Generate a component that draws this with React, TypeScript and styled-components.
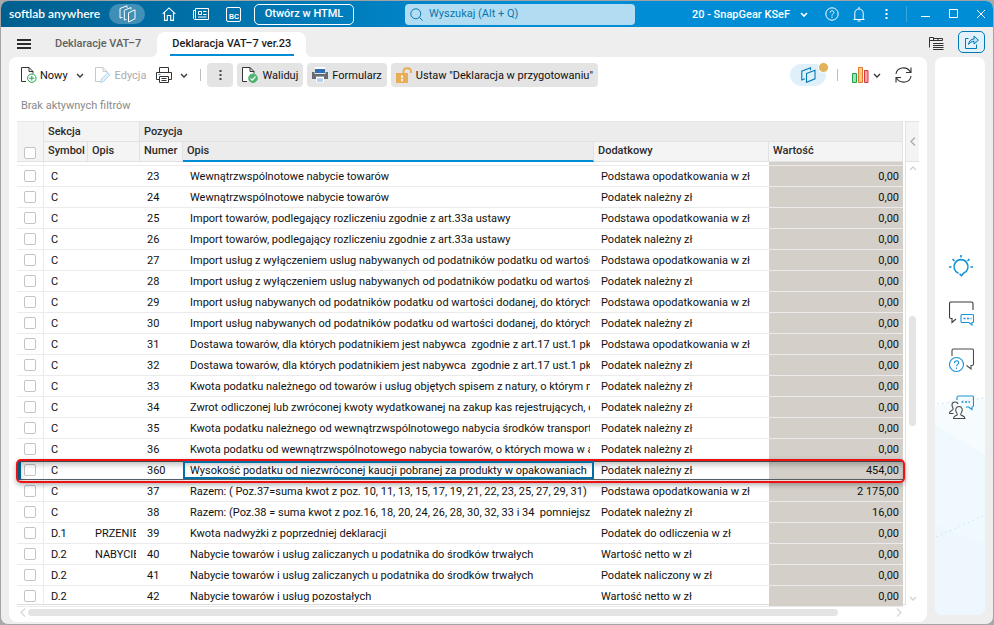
import React from "react";
import styled, { createGlobalStyle, css } from "styled-components";

const GlobalStyle = createGlobalStyle`
  *, *::before, *::after { box-sizing: border-box; }
  body {
    margin: 0;
    background: #a9a9a9;
    color: #1c1c1c;
    font: 11px/16px Roboto, sans-serif;
  }
  button, input { font: inherit; color: inherit; }
  svg { display: block; flex: none; fill: none; }
`;

const Window = styled.div`
  display: flex;
  flex-direction: column;
  height: 100vh;
  border: 1px solid #a3a3a3;
  border-radius: 8px;
  background: #eeeeee;
  overflow: hidden;
`;

const TitleBar = styled.header`
  display: flex;
  align-items: center;
  flex: none;
  height: 26px;
  padding-left: 8px;
  color: #fff;
  background: linear-gradient(90deg, #00608f 0, #0070a8 20%, #008dd5 52%);
`;

const Brand = styled.strong`
  width: 100px;
  font: 600 12px/16px Lato, sans-serif;
  white-space: nowrap;
`;

const PlainButton = styled.button`
  display: flex;
  align-items: center;
  justify-content: center;
  flex: none;
  padding: 0;
  border: 0;
  background: none;
`;

const BrandPill = styled(PlainButton)`
  width: 36px;
  height: 20px;
  margin-right: 12px;
  border-radius: 10px;
  background: rgba(255, 255, 255, 0.25);
`;

const TitleIcon = styled(PlainButton)<{ $w: number }>`
  width: ${(p) => p.$w}px;
  height: 22px;
`;

const OpenHtml = styled(PlainButton)`
  width: 100px;
  height: 21px;
  margin-left: 8px;
  border: 1px solid #fff;
  border-radius: 5px;
  font-weight: 500;
  white-space: nowrap;
`;

const SearchBox = styled.label`
  display: flex;
  align-items: center;
  gap: 6px;
  width: 230px;
  height: 21px;
  margin-left: 51px;
  padding: 0 5px;
  border-radius: 4px;
  color: #0878b0;
  background: #b1dcf2;
`;

const SearchInput = styled.input`
  flex: 1;
  min-width: 0;
  padding: 0;
  border: 0;
  outline: 0;
  background: none;
  &::placeholder { color: #0878b0; opacity: 1; }
`;

const TitleRight = styled.div`
  display: flex;
  align-items: center;
  margin-left: auto;
`;

const CompanyButton = styled(PlainButton)`
  gap: 10px;
  margin-right: 10px;
  padding-top: 2px;
  font-weight: 500;
  white-space: nowrap;
  svg { margin-bottom: 2px; }
`;

const TitleDivider = styled.span`
  width: 1px;
  height: 16px;
  margin: 0 6px;
  background: #3aa6de;
`;

const Workspace = styled.div`
  display: flex;
  flex: 1;
  min-height: 0;
  padding: 0 8px 2px;
  gap: 8px;
`;

const MainColumn = styled.div`
  display: flex;
  flex: 1;
  flex-direction: column;
  min-width: 0;
`;

const TabBar = styled.nav`
  display: flex;
  align-items: flex-end;
  height: 30px;
  flex: none;
`;

const MenuButton = styled(PlainButton)`
  width: 30px;
  height: 26px;
  margin-right: 8px;
`;

const Tab = styled.button<{ $active?: boolean }>`
  position: relative;
  height: 25px;
  padding: 0 8px 2px;
  border: 0;
  background: none;
  color: #616161;
  font-weight: 500;
  white-space: nowrap;
  ${(p) =>
    p.$active &&
    css`
      margin-left: 8px;
      padding: 0 15px 2px;
      border-radius: 8px 8px 0 0;
      color: #1c1c1c;
      background: #fff;
      &::before, &::after {
        content: "";
        position: absolute;
        bottom: 0;
        width: 6px;
        height: 6px;
      }
      &::before {
        left: -6px;
        background: radial-gradient(circle at 0 0, transparent 6px, #fff 6px);
      }
      &::after {
        right: -6px;
        background: radial-gradient(circle at 100% 0, transparent 6px, #fff 6px);
      }
    `}
`;

const TabUnderline = styled.span`
  position: absolute;
  right: 12px;
  bottom: 1px;
  left: 13px;
  height: 2px;
  background: #008dd5;
`;

const Card = styled.main`
  display: flex;
  flex: 1;
  flex-direction: column;
  min-height: 0;
  padding: 6px 8px 3px;
  border-radius: 8px;
  background: #fff;
`;

const Toolbar = styled.div`
  display: flex;
  align-items: center;
  height: 24px;
  flex: none;
  padding-left: 4px;
`;

const ToolButton = styled(PlainButton)<{ $filled?: boolean; $faded?: boolean }>`
  gap: ${(p) => (p.$filled || p.$faded ? 4 : 3)}px;
  height: 24px;
  padding-top: 2px;
  white-space: nowrap;
  color: ${(p) => (p.$faded ? "#ababab" : "#111")};
  svg { margin-bottom: 2px; }
  ${(p) =>
    p.$faded &&
    css`
      margin: 0 10px 0 3px;
    `}
  ${(p) =>
    p.$filled &&
    css`
      margin-right: 4px;
      padding: 2px 5px 0;
      border-radius: 4px;
      background: #e4e4e4;
    `}
`;

const MoreButton = styled(ToolButton)`
  width: 26px;
`;

const ArrowButton = styled(PlainButton)<{ $narrow?: boolean }>`
  width: ${(p) => (p.$narrow ? 16 : 24)}px;
  height: 24px;
`;

const Divider = styled.span<{ $wide?: boolean }>`
  width: 1px;
  height: 12px;
  margin: ${(p) => (p.$wide ? "0 14px 0 11px" : "0 6px 0 4px")};
  background: #bdbdbd;
`;

const ToolbarRight = styled.div`
  display: flex;
  align-items: center;
  margin-left: auto;
  padding-right: 7px;
`;

const LayersPill = styled(PlainButton)`
  position: relative;
  width: 36px;
  height: 22px;
  border-radius: 11px;
  background: #e0f0fa;
`;

const Dot = styled.span`
  position: absolute;
  top: -2px;
  right: -3px;
  width: 11px;
  height: 11px;
  border: 1px solid #fff;
  border-radius: 50%;
  background: #e2b25a;
`;

const RefreshButton = styled(ToolButton)`
  margin-left: 10px;
`;

const FilterNote = styled.p`
  flex: none;
  margin: 11px 4px 7px;
  color: #8a8a8a;
`;

const GridArea = styled.section`
  display: flex;
  flex: 1;
  min-height: 0;
`;

const TableWrap = styled.div`
  flex: 1;
  min-width: 0;
  padding-right: 2px;
  border-right: 1px solid #e2e2e2;
  border-bottom: 1px solid #dcdcdc;
`;

const Table = styled.table`
  width: 100%;
  table-layout: fixed;
  border-collapse: separate;
  border-spacing: 0;
`;

const Col = styled.col<{ $w?: number }>`
  width: ${(p) => (p.$w ? `${p.$w}px` : "auto")};
`;

const HeadCell = styled.th<{ $mid?: boolean; $dark?: boolean; $sorted?: boolean }>`
  height: ${(p) => (p.$mid ? 20 : 21)}px;
  padding: ${(p) => (p.$mid && !p.$sorted ? "0 4px 2px" : "0 4px")};
  border-top: ${(p) => (p.$mid ? "0" : "1px solid #e6e6e6")};
  border-right: 1px solid #e2e2e2;
  border-bottom: ${(p) => (p.$sorted ? "2px solid #008dd5" : "1px solid #e2e2e2")};
  background: ${(p) => (p.$dark ? "#ececec" : "#f4f4f4")};
  color: #2b2b2b;
  font-weight: 500;
  text-align: left;
  white-space: nowrap;
  overflow: hidden;
`;

const CheckHead = styled(HeadCell)`
  padding: 0 0 2px 7px;
  vertical-align: bottom;
`;

const Check = styled.input.attrs({ type: "checkbox" })`
  appearance: none;
  display: block;
  width: 12px;
  height: 12px;
  margin: 0;
  border: 1px solid #c4c4c4;
  border-radius: 2px;
  background: #fff;
`;

const Cell = styled.td<{ $value?: boolean }>`
  height: 21px;
  padding: 2px 4px 0 7px;
  border-bottom: 1px solid #ebebeb;
  color: #111;
  white-space: pre;
  ${(p) =>
    p.$value &&
    css`
      background: #d4cfc8;
      text-align: right;
    `}
`;

const CheckCell = styled(Cell)`
  padding-top: 0;
  border-right: 1px solid #ebebeb;
`;

const Clip = styled.div`
  overflow: hidden;
`;

const SliverCell = styled.td<{ $value?: boolean; $first?: boolean }>`
  height: 4px;
  padding: 0;
  border-right: ${(p) => (p.$first ? "1px solid #ebebeb" : "0")};
  border-bottom: 1px solid #ebebeb;
  background: ${(p) => (p.$value ? "#d4cfc8" : "#fff")};
`;

const Row = styled.tr<{ $selected?: boolean }>`
  ${(p) =>
    p.$selected &&
    css`
      position: relative;
      z-index: 1;
    `}
`;

const RowFrame = styled.span`
  position: absolute;
  inset: 1px -1px 1px 1px;
  border: solid #566268;
  border-width: 1px 0;
  border-left: 3px solid #0070a5;
  pointer-events: none;
`;

const Highlight = styled.span`
  position: absolute;
  inset: -1px -2px -2px -1px;
  border: 2px solid #ee1111;
  border-radius: 5px;
  box-shadow: 0 2px 5px rgba(0, 0, 0, 0.3), inset 2px 3px 6px rgba(0, 0, 0, 0.3);
  pointer-events: none;
`;

const EditFrame = styled.span`
  position: absolute;
  inset: 1px 0;
  border: 2px solid #0070a5;
  pointer-events: none;
`;

const EditCell = styled(Cell)`
  position: relative;
`;

const SideRail = styled.div`
  display: flex;
  flex-direction: column;
  align-items: center;
  width: 13px;
  flex: none;
  padding-bottom: 2px;
`;

const CollapseButton = styled(PlainButton)`
  width: 100%;
  height: 41px;
  border: solid #e2e2e2;
  border-width: 1px 0;
  background: #f4f4f4;
`;

const VTrack = styled.div`
  display: flex;
  flex: 1;
  flex-direction: column;
  align-items: center;
  width: 100%;
  padding-top: 2px;
`;

const VThumb = styled.div`
  width: 7px;
  height: 110px;
  margin: 143px 0 auto;
  border-radius: 4px;
  background: #e4e4e4;
`;

const HScroll = styled.div`
  display: flex;
  align-items: center;
  flex: none;
  height: 14px;
  padding: 0 16px 0 2px;
`;

const HTrack = styled.div`
  flex: 1;
  margin: 0 5px 0 1px;
`;

const HThumb = styled.div`
  width: 94%;
  height: 7px;
  border-radius: 4px;
  background: #e4e4e4;
`;

const SideColumn = styled.aside`
  display: flex;
  flex-direction: column;
  width: 50px;
  flex: none;
  padding-bottom: 7px;
`;

const SideTop = styled.div`
  display: flex;
  align-items: center;
  justify-content: space-between;
  align-self: flex-end;
  width: 56px;
  height: 30px;
  flex: none;
`;

const ListButton = styled(PlainButton)`
  padding-top: 3px;
`;

const ShareButton = styled(PlainButton)`
  width: 27px;
  height: 22px;
  border: 1px solid #0079b5;
  border-radius: 5px;
  background: #e2f1fa;
`;

const SidePanel = styled.div`
  position: relative;
  display: flex;
  flex: 1;
  flex-direction: column;
  align-items: center;
  gap: 21px;
  padding: 196px 0 0 2px;
  border-radius: 8px;
  background: #fff;
  overflow: hidden;
`;

const PanelArt = styled.svg`
  position: absolute;
  bottom: 0;
  left: 0;
  width: 50px;
  height: 220px;
`;

const SideButton = styled(PlainButton)`
  position: relative;
  width: 26px;
  height: 26px;
`;

type Dir = "up" | "down" | "left" | "right";
const chevrons: Record<Dir, string> = {
  down: "M1 3l3 3 3-3",
  up: "M1 6l3-3 3 3",
  left: "M6 0.5L2 4.5l4 4",
  right: "M2 0.5l4 4-4 4",
};

const Chevron = ({ dir = "down", color = "#333", weight = 1.3 }: { dir?: Dir; color?: string; weight?: number }) => (
  <svg width="8" height="9" viewBox="0 0 8 9" stroke={color} strokeWidth={weight}>
    <path d={chevrons[dir]} />
  </svg>
);

const StackIcon = () => (
  <svg width="17" height="18" viewBox="0 0 17 18" stroke="#fff" strokeWidth="1">
    <path d="M9.5 7.8L16 4.8v9L9.5 17z" />
    <path d="M7.5 14.5L5.3 15V5.3L12 2.5v2" />
    <path d="M3.5 12.5L1 13V3.5L8 .8v2" />
  </svg>
);

const HomeIcon = () => (
  <svg width="14" height="14" viewBox="0 0 14 14" stroke="#fff" strokeWidth="1.1">
    <path d="M.7 6.8L7 .9l6.3 5.9M2.5 5.5v7.9h2.8V8.5h3.4v4.9h2.8V5.5" />
  </svg>
);

const NewsIcon = () => (
  <svg width="16" height="12" viewBox="0 0 16 12" stroke="#fff" strokeWidth="1">
    <path d="M2.5.5h13v11H1.5l-1-1v-8h2zM2.5 2.5v8M5.5 3.5h3v3h-3zM10 3.5h3.5M10 6.5h3.5M5 9h8.500" />
  </svg>
);

const BcText = styled.span`
  display: flex;
  align-items: flex-end;
  justify-content: flex-end;
  width: 15px;
  height: 15px;
  border: 1px solid #fff;
  border-radius: 2px;
  padding-right: 1px;
  font: 700 7px/8px "Liberation Sans", sans-serif;
`;

const SearchIcon = () => (
  <svg width="13" height="13" viewBox="0 0 13 13" stroke="#0878b0" strokeWidth="1">
    <circle cx="5.8" cy="5.8" r="5" />
    <path d="M9.4 9.4l3.2 3.2" />
  </svg>
);

const HelpIcon = () => (
  <svg width="14" height="14" viewBox="0 0 14 14" stroke="#fff" strokeWidth="1">
    <circle cx="7" cy="7" r="6.2" />
    <path d="M5.2 5.6c0-2.6 3.7-2.4 3.7-.2C8.9 6.8 7 6.8 7 8.6M7 9.6v1.2" />
  </svg>
);

const BellIcon = () => (
  <svg width="12" height="16" viewBox="0 0 12 16" stroke="#fff" strokeWidth="1">
    <path d="M.5 13.5h11M1.8 13.5V7.2c0-5.6 8.4-5.6 8.4 0v6.3M6 .8v2M4.5 15h3" />
  </svg>
);

const Dots = ({ color = "#fff" }: { color?: string }) => (
  <svg width="3" height="12" viewBox="0 0 3 12">
    <path fill={color} d="M.5 1h2v2h-2zM.5 5h2v2h-2zM.5 9h2v2h-2z" />
  </svg>
);

const MinIcon = () => (
  <svg width="10" height="10" viewBox="0 0 10 10" stroke="#fff">
    <path d="M0 7.5h9" />
  </svg>
);
const MaxIcon = () => (
  <svg width="10" height="10" viewBox="0 0 10 10" stroke="#fff">
    <path d="M.5.5h8v8h-8z" />
  </svg>
);
const CloseIcon = () => (
  <svg width="10" height="10" viewBox="0 0 10 10" stroke="#fff">
    <path d="M1 1l8 8M9 1L1 9" />
  </svg>
);

const MenuIcon = () => (
  <svg width="14" height="10" viewBox="0 0 14 10" stroke="#2b2b2b" strokeWidth="2">
    <path d="M0 1h14M0 5h14M0 9h14" />
  </svg>
);

const filePath = "M5 14.5H.5V.5H8l4 4v2M8 .5v4h4";

const NewFileIcon = () => (
  <svg width="16" height="16" viewBox="0 0 16 16" stroke="#333" strokeWidth="1">
    <path d={filePath} />
    <circle cx="10.8" cy="11.2" r="4.2" fill="#fff" stroke="#19a34a" />
    <path stroke="#19a34a" d="M10.8 8.7v5M8.3 11.2h5" />
  </svg>
);

const EditFileIcon = () => (
  <svg width="16" height="16" viewBox="0 0 16 16" stroke="#c9c9c9" strokeWidth="1">
    <path d={filePath} />
    <path fill="#e3f1fa" stroke="#a9d4ee" d="M5.500 15.500l1-3.500 6.500-6.500 2 2.300-6.500 6.700z" />
  </svg>
);

const CheckFileIcon = () => (
  <svg width="16" height="16" viewBox="0 0 16 16" stroke="#333" strokeWidth="1">
    <path fill="#fff" d={filePath} />
    <circle cx="11" cy="11.2" r="4.3" fill="#4db36e" stroke="#4db36e" />
    <path stroke="#fff" strokeWidth="1.2" d="M8.500 11.300l1.800 1.800 3.200-3.600" />
  </svg>
);

const PrinterIcon = () => (
  <svg width="16" height="16" viewBox="0 0 16 16" stroke="#333" strokeWidth="1">
    <path d="M3.5 5.5v-5h9v5M3.5 12.5h-3v-7h15v7h-3" />
    <path d="M3.5 9.5h9v6h-9z" />
    <path d="M5.5 11.5h5M5.5 13.5h5" />
    <path stroke="#1b8fd0" d="M2.5 7.5h2" />
  </svg>
);

const FormPrinterIcon = () => (
  <svg width="16" height="16" viewBox="0 0 16 16">
    <path fill="#fff" d="M3 0h10v3H3z" />
    <path fill="#666b70" d="M0 5h2.500v2h11V5H16v7H0z" />
    <path fill="#2f6db5" d="M3 2h10v4H3z" />
    <path fill="#fff" d="M4 9.500h8v6H4z" />
    <path stroke="#9aa4ad" d="M3.500 9.500h9" />
    <path stroke="#7ba6d6" d="M5 12h6M5 14h6" />
  </svg>
);

const LockIcon = () => (
  <svg width="16" height="16" viewBox="0 0 16 16">
    <path stroke="#e9ad55" strokeWidth="2" d="M7.500 6V4.500c0-4.500 7.500-4.500 7.500 0V6" />
    <path fill="#e9ad55" d="M0 6h12v10H0z" />
    <path fill="#fff" d="M5 8.500h2v2H5zM5.300 11.500h1.500v3H5.300z" />
  </svg>
);

const LayersIcon = () => (
  <svg width="15" height="16" viewBox="0 0 15 16" stroke="#0079b5" strokeWidth="1.1">
    <path d="M5.500 6.500l8.500-3.200v8.500l-8.500 3.500z" />
    <path d="M3.800 11.800L.8 13V4.200L9.500.8v2.500" />
  </svg>
);

const ChartIcon = () => (
  <svg width="17" height="16" viewBox="0 0 17 16" strokeWidth="1">
    <path fill="#a9dcb9" stroke="#19a34a" d="M.5 6.500h4v9h-4z" />
    <path fill="#f8cd8c" stroke="#e8772a" d="M6.500.5h4v15h-4z" />
    <path fill="#f4a8ad" stroke="#d9363e" d="M12.500 3.500h3.500v12h-3.500z" />
  </svg>
);

const RefreshIcon = () => (
  <svg width="17" height="16" viewBox="0 0 17 16" stroke="#333" strokeWidth="1.1">
    <path d="M1 7C1.800.2 11.500-1.500 15.500 5M16 .5v5h-5M16 9c-.8 6.800-10.500 8.500-14.500 2M1 15.500v-5h5" />
  </svg>
);

const ListIcon = () => (
  <svg width="15" height="14" viewBox="0 0 15 14" stroke="#333" strokeWidth="1">
    <path d="M.5 10.500V.5h4v3M.5 3.500h13v-2h-9M9 1.500v2M4 6.500h10.500M4 8.500h10.500M4 10.500h10.500M4 12.500h10.500" />
  </svg>
);

const ShareIcon = () => (
  <svg width="14" height="14" viewBox="0 0 14 14" stroke="#0079b5" strokeWidth="1">
    <path d="M3.500 3.500h-3v10h11v-4" />
    <path fill="#b9dff3" d="M3.500 9.500C4 5.800 6 4 9 4V1l4.500 4.200L9 9V6.500c-2.500 0-4 .8-5.500 3z" />
  </svg>
);

const BulbIcon = () => (
  <svg width="24" height="22" viewBox="0 0 24 22" stroke="#0f93d6" strokeWidth="1.6">
    <path d="M9.500 18.200a7 7 0 1 1 5 0l-2 2.500-2-1.800M12 0v2.500M3.500 4l2 2M20.500 4l-2 2M0 12h2.500M21.500 12H24" />
  </svg>
);

const ChatIcon = () => (
  <svg width="25" height="25" viewBox="0 0 25 25" stroke="#3a3a3a" strokeWidth="1.1">
    <path d="M24 9V2.500c0-1-.5-1.500-1.500-1.500H2C1 1 .5 1.500.5 2.500V16c0 1 .5 1.500 1.500 1.500h1v4l4-3.500" />
    <path stroke="#1b93d6" d="M13 13.500h10.500c.7 0 1 .3 1 1v6c0 .7-.3 1-1 1H23V24l-3-2.500h-7c-.7 0-1-.3-1-1v-6c0-.7.300-1 1-1z" />
    <path stroke="#1b93d6" strokeDasharray="2 1.500" strokeWidth="1.5" d="M14.500 17.500h8" />
  </svg>
);

const AskIcon = () => (
  <svg width="25" height="25" viewBox="0 0 25 25" stroke="#4a4a4a" strokeWidth="1.1">
    <path d="M3 8V2.500C3 1.500 3.500 1 4.500 1H23c1 0 1.500.5 1.500 1.500V16c0 1-.5 1.500-1.500 1.500h-1V21l-4.500-3.500" />
    <circle cx="7.5" cy="16.5" r="7" stroke="#1b93d6" />
    <path stroke="#1b93d6" d="M5.500 15c0-3 4.200-2.800 4.200-.3 0 1.700-2.200 1.700-2.200 3.600M7.500 19.500V21" />
  </svg>
);

const PeopleIcon = () => (
  <svg width="25" height="25" viewBox="0 0 25 25" stroke="#4a4a4a" strokeWidth="1.1">
    <path stroke="#1b93d6" d="M8 5V2.500C8 1.500 8.500 1 9.500 1H23c1 0 1.500.5 1.500 1.500v8c0 1-.5 1.500-1.500 1.500v2.500L19.500 12H17" />
    <path stroke="#1b93d6" strokeDasharray="2 1.500" strokeWidth="1.5" d="M12.500 7h8.500" />
    <path d="M4.500 23.500c0-2.500 2-2.600 3.300-3.300.7-.5.500-1.500 0-2.200C5.500 15 7 11.500 10 11.500s4.500 3.500 2.200 6.500c-.5.700-.7 1.700 0 2.200 1.300.7 3.800.8 3.800 3.300z" />
    <path d="M9 9c-1-3-6-2.500-6 1 0 2 1.500 3 1 4.500-.5 1.200-3.500 1-3.500 4h4" />
  </svg>
);

type Entry = { sym: string; sec?: string; no: string; text: string; extra: string; value?: string; selected?: boolean };

const base = "Podstawa opodatkowania w zł";
const due = "Podatek należny zł";

const rows: Entry[] = [
  { sym: "C", no: "23", text: "Wewnątrzwspólnotowe nabycie towarów", extra: base },
  { sym: "C", no: "24", text: "Wewnątrzwspólnotowe nabycie towarów", extra: due },
  { sym: "C", no: "25", text: "Import towarów, podlegający rozliczeniu zgodnie z art.33a ustawy", extra: base },
  { sym: "C", no: "26", text: "Import towarów, podlegający rozliczeniu zgodnie z art.33a ustawy", extra: due },
  { sym: "C", no: "27", text: "Import usług z wyłączeniem uslug nabywanych od podatników podatku od wartości", extra: base },
  { sym: "C", no: "28", text: "Import usług z wyłączeniem uslug nabywanych od podatników podatku od wartości", extra: due },
  { sym: "C", no: "29", text: "Import usług nabywanych od podatników podatku od wartości dodanej, do których", extra: base },
  { sym: "C", no: "30", text: "Import usług nabywanych od podatników podatku od wartości dodanej, do których", extra: due },
  { sym: "C", no: "31", text: "Dostawa towarów, dla których podatnikiem jest nabywca  zgodnie z art.17 ust.1 pkt", extra: base },
  { sym: "C", no: "32", text: "Dostawa towarów, dla których podatnikiem jest nabywca  zgodnie z art.17 ust.1 pkt", extra: due },
  { sym: "C", no: "33", text: "Kwota podatku należnego od towarów i usług objętych spisem z natury, o którym mowa", extra: due },
  { sym: "C", no: "34", text: "Zwrot odliczonej lub zwróconej kwoty wydatkowanej na zakup kas rejestrujących, o", extra: due },
  { sym: "C", no: "35", text: "Kwota podatku należnego od wewnątrzwspólnotowego nabycia środków transportu", extra: due },
  { sym: "C", no: "36", text: "Kwota podatku od wewnątrzwspólnotowego nabycia towarów, o których mowa w art.", extra: due },
  { sym: "C", no: "360", text: "Wysokość podatku od niezwróconej kaucji pobranej za produkty w opakowaniach", extra: due, value: "454,00", selected: true },
  { sym: "C", no: "37", text: "Razem: ( Poz.37=suma kwot z poz. 10, 11, 13, 15, 17, 19, 21, 22, 23, 25, 27, 29, 31)", extra: base, value: "2 175,00" },
  { sym: "C", no: "38", text: "Razem: (Poz.38 = suma kwot z poz.16, 18, 20, 24, 26, 28, 30, 32, 33 i 34  pomniejszona", extra: due, value: "16,00" },
  { sym: "D.1", sec: "PRZENIESIENIE", no: "39", text: "Kwota nadwyżki z poprzedniej deklaracji", extra: "Podatek do odliczenia w zł" },
  { sym: "D.2", sec: "NABYCIE", no: "40", text: "Nabycie towarów i usług zaliczanych u podatnika do środków trwałych", extra: "Wartość netto w zł" },
  { sym: "D.2", no: "41", text: "Nabycie towarów i usług zaliczanych u podatnika do środków trwałych", extra: "Podatek naliczony w zł" },
  { sym: "D.2", no: "42", text: "Nabycie towarów i usług pozostałych", extra: "Wartość netto w zł" },
];

const GridRow = ({ row }: { row: Entry }) => {
  const TextCell = row.selected ? EditCell : Cell;
  return (
    <Row $selected={row.selected} aria-selected={row.selected}>
      <CheckCell>
        <Check aria-label={`Zaznacz pozycję ${row.no}`} />
        {row.selected && <RowFrame />}
        {row.selected && <Highlight />}
      </CheckCell>
      <Cell>{row.sym}</Cell>
      <Cell><Clip>{row.sec}</Clip></Cell>
      <Cell>{row.no}</Cell>
      <TextCell>
        <Clip>{row.text}</Clip>
        {row.selected && <EditFrame />}
      </TextCell>
      <Cell>{row.extra}</Cell>
      <Cell $value>{row.value ?? "0,00"}</Cell>
    </Row>
  );
};

const DataGrid = () => (
  <Table>
    <colgroup>
      <Col $w={27} />
      <Col $w={44} />
      <Col $w={52} />
      <Col $w={43} />
      <Col />
      <Col $w={175} />
      <Col $w={134} />
    </colgroup>
    <thead>
      <tr>
        <CheckHead rowSpan={2}><Check aria-label="Zaznacz wszystkie" /></CheckHead>
        <HeadCell colSpan={2}>Sekcja</HeadCell>
        <HeadCell colSpan={4} $dark>Pozycja</HeadCell>
      </tr>
      <tr>
        <HeadCell $mid>Symbol</HeadCell>
        <HeadCell $mid>Opis</HeadCell>
        <HeadCell $mid>Numer</HeadCell>
        <HeadCell $mid $dark $sorted>Opis</HeadCell>
        <HeadCell $mid>Dodatkowy</HeadCell>
        <HeadCell $mid>Wartość</HeadCell>
      </tr>
    </thead>
    <tbody>
      <tr aria-hidden="true">
        <SliverCell $first />
        <SliverCell colSpan={5} />
        <SliverCell $value />
      </tr>
      {rows.map((row) => <GridRow key={row.no} row={row} />)}
    </tbody>
  </Table>
);

export default function App() {
  return (
    <>
      <GlobalStyle />
      <Window>
        <TitleBar>
          <Brand>softlab anywhere</Brand>
          <BrandPill aria-label="Moduły"><StackIcon /></BrandPill>
          <TitleIcon $w={24} aria-label="Start"><HomeIcon /></TitleIcon>
          <TitleIcon $w={40} aria-label="Aktualności"><NewsIcon /></TitleIcon>
          <TitleIcon $w={25} aria-label="BC"><BcText>BC</BcText></TitleIcon>
          <OpenHtml>Otwórz w HTML</OpenHtml>
          <SearchBox>
            <SearchIcon />
            <SearchInput aria-label="Wyszukaj" placeholder="Wyszukaj (Alt + Q)" />
          </SearchBox>
          <TitleRight>
            <CompanyButton>20 - SnapGear KSeF <Chevron color="#fff" weight={1.6} /></CompanyButton>
            <TitleIcon $w={28} aria-label="Pomoc"><HelpIcon /></TitleIcon>
            <TitleIcon $w={26} aria-label="Powiadomienia"><BellIcon /></TitleIcon>
            <TitleIcon $w={28} aria-label="Więcej"><Dots /></TitleIcon>
            <TitleDivider />
            <TitleIcon $w={26} aria-label="Minimalizuj"><MinIcon /></TitleIcon>
            <TitleIcon $w={30} aria-label="Maksymalizuj"><MaxIcon /></TitleIcon>
            <TitleIcon $w={24} aria-label="Zamknij"><CloseIcon /></TitleIcon>
          </TitleRight>
        </TitleBar>
        <Workspace>
          <MainColumn>
            <TabBar>
              <MenuButton aria-label="Menu"><MenuIcon /></MenuButton>
              <Tab>Deklaracje VAT–7</Tab>
              <Tab $active>Deklaracja VAT–7 ver.23<TabUnderline /></Tab>
            </TabBar>
            <Card>
              <Toolbar>
                <ToolButton><NewFileIcon />Nowy</ToolButton>
                <ArrowButton aria-label="Nowy – opcje"><Chevron /></ArrowButton>
                <ToolButton $faded disabled><EditFileIcon />Edycja</ToolButton>
                <ToolButton aria-label="Drukuj"><PrinterIcon /></ToolButton>
                <ArrowButton aria-label="Drukuj – opcje"><Chevron /></ArrowButton>
                <Divider />
                <MoreButton $filled aria-label="Więcej"><Dots color="#444" /></MoreButton>
                <ToolButton $filled><CheckFileIcon />Waliduj</ToolButton>
                <ToolButton $filled><FormPrinterIcon />Formularz</ToolButton>
                <ToolButton $filled><LockIcon />Ustaw "Deklaracja w przygotowaniu"</ToolButton>
                <ToolbarRight>
                  <LayersPill aria-label="Warstwy"><LayersIcon /><Dot /></LayersPill>
                  <Divider $wide />
                  <ToolButton aria-label="Wykres"><ChartIcon /></ToolButton>
                  <ArrowButton $narrow aria-label="Wykres – opcje"><Chevron /></ArrowButton>
                  <RefreshButton aria-label="Odśwież"><RefreshIcon /></RefreshButton>
                </ToolbarRight>
              </Toolbar>
              <FilterNote>Brak aktywnych filtrów</FilterNote>
              <GridArea>
                <TableWrap><DataGrid /></TableWrap>
                <SideRail>
                  <CollapseButton aria-label="Zwiń"><Chevron dir="left" color="#aaa" /></CollapseButton>
                  <VTrack>
                    <Chevron dir="up" color="#d2d2d2" />
                    <VThumb />
                    <Chevron color="#d2d2d2" />
                  </VTrack>
                </SideRail>
              </GridArea>
              <HScroll>
                <Chevron dir="left" color="#d8d8d8" />
                <HTrack><HThumb /></HTrack>
                <Chevron dir="right" color="#d8d8d8" />
              </HScroll>
            </Card>
          </MainColumn>
          <SideColumn>
            <SideTop>
              <ListButton aria-label="Lista"><ListIcon /></ListButton>
              <ShareButton aria-label="Udostępnij"><ShareIcon /></ShareButton>
            </SideTop>
            <SidePanel>
              <PanelArt viewBox="0 0 50 220" aria-hidden="true">
                <path fill="#f6fbfe" d="M0 12L30 0l20 5v215H0z" />
                <path fill="#f0f9fd" d="M0 30L50 60v160H0z" />
                <path fill="#eef6fe" d="M0 130L50 150v70H0z" />
                <path stroke="#cfe8f6" strokeDasharray="2 3" d="M1 142L50 120M2 9L50 3" />
              </PanelArt>
              <SideButton aria-label="Wskazówki"><BulbIcon /></SideButton>
              <SideButton aria-label="Czat"><ChatIcon /></SideButton>
              <SideButton aria-label="Pytania"><AskIcon /></SideButton>
              <SideButton aria-label="Społeczność"><PeopleIcon /></SideButton>
            </SidePanel>
          </SideColumn>
        </Workspace>
      </Window>
    </>
  );
}
